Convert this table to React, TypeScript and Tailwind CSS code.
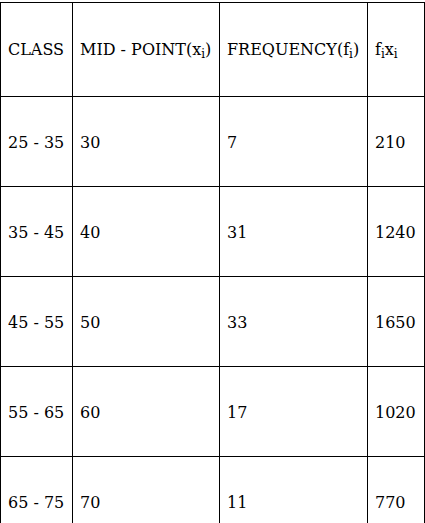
import React from "react";

const rows = [
  ["25 - 35", "30", "7", "210"],
  ["35 - 45", "40", "31", "1240"],
  ["45 - 55", "50", "33", "1650"],
  ["55 - 65", "60", "17", "1020"],
  ["65 - 75", "70", "11", "770"],
];

export default function App() {
  const td = "border border-black px-[7px] align-middle text-left";
  return (
    <div className="bg-white w-[425px] h-[523px] overflow-hidden pt-[2px]" style={{ fontFamily: '"DejaVu Serif", serif' }}>
      <table className="border-collapse table-fixed w-[424px] text-[16px] text-black leading-normal">
        <colgroup>
          <col className="w-[72px]" />
          <col className="w-[147px]" />
          <col className="w-[148px]" />
          <col className="w-[57px]" />
        </colgroup>
        <tbody>
          <tr className="h-[94px]">
            <td className={td}>CLASS</td>
            <td className={td}>
              MID - POINT(x<sub>i</sub>)
            </td>
            <td className={td}>
              FREQUENCY(f<sub>i</sub>)
            </td>
            <td className={td}>
              f<sub>i</sub>x<sub>i</sub>
            </td>
          </tr>
          {rows.map((r) => (
            <tr key={r[0]} className="h-[90px]">
              {r.map((c, i) => (
                <td key={i} className={td + " pt-[2px]"}>
                  {c}
                </td>
              ))}
            </tr>
          ))}
        </tbody>
      </table>
    </div>
  );
}
